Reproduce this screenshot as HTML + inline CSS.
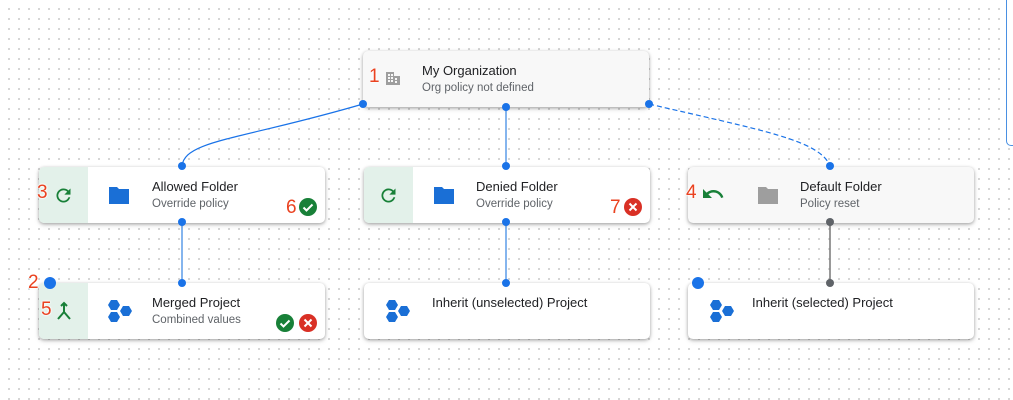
<!DOCTYPE html>
<html><head><meta charset="utf-8"><style>
*{margin:0;padding:0;box-sizing:border-box}
body{width:1013px;height:400px;overflow:hidden;position:relative;font-family:"Liberation Sans",sans-serif;
background:#fff;background-image:radial-gradient(circle,#cfcfcf 0.9px,transparent 1.2px);background-size:10px 10px;background-position:4px 4px}
.card{position:absolute;width:286px;height:56px;background:#fff;border-radius:5px;box-shadow:0 1px 3px rgba(0,0,0,.3),0 2px 6px rgba(0,0,0,.12)}
.card.grey{background:#f8f8f8}
.side{position:absolute;left:0;top:0;width:49px;height:100%;background:#e3f1ea;border-radius:5px 0 0 5px}
.t{position:absolute;left:113px;top:12px;font-size:13px;color:#202124}
.s{position:absolute;left:113px;top:31px;font-size:11.5px;color:#5f6368}
.ic{position:absolute}
.num{position:absolute;color:#ea4220;font-size:19px;text-shadow:0 0 2px #fff,0 0 2px #fff,0 0 2px #fff}
svg.lines{position:absolute;left:0;top:0}
</style></head><body>
<div style="position:absolute;left:1006px;top:-5px;width:20px;height:151px;border:1.5px solid #4a90e2;border-radius:5px;background:#fff"></div>
<svg class="lines" width="1013" height="400">
<path d="M363 104 C 240 140,185 140,182 166" stroke="#1a73e8" fill="none" stroke-width="1.2"/>
<path d="M506 104 V166" stroke="#5c9ce8" stroke-width="1.5"/>
<path d="M649 104 C 760 130,820 140,830 166" stroke="#1a73e8" fill="none" stroke-width="1.2" stroke-dasharray="5,3"/>
<path d="M182 222 V283" stroke="#5c9ce8" stroke-width="1.5"/>
<path d="M506 222 V283" stroke="#5c9ce8" stroke-width="1.5"/>
<path d="M830 222 V283" stroke="#777" stroke-width="1.5"/>
</svg>

<div class="card grey" style="left:363px;top:51px">
<svg class="ic" style="left:22px;top:19px" width="16" height="16" viewBox="0 0 16 16"><path d="M1 2h8v4h6v9H1z" fill="#9e9e9e"/><g fill="#f8f8f8"><rect x="3" y="4" width="2" height="2"/><rect x="6" y="4" width="2" height="2"/><rect x="3" y="7" width="2" height="2"/><rect x="6" y="7" width="2" height="2"/><rect x="10" y="8" width="2" height="2"/><rect x="3" y="10" width="2" height="2"/><rect x="6" y="10" width="2" height="2"/><rect x="10" y="11" width="2" height="2"/></g></svg>
<div class="t" style="left:59px;top:12px">My Organization</div><div class="s" style="left:59px;top:31px">Org policy not defined</div></div>
<div class="num" style="left:369px;top:66px">1</div>

<div class="card" style="left:39px;top:167px"><div class="side"></div>
<svg class="ic" style="left:14px;top:18px" width="21" height="21" viewBox="0 0 24 24"><path d="M17.65 6.35A8 8 0 1 0 19.73 14h-2.08A6 6 0 1 1 12 6c1.66 0 3.14.69 4.22 1.78L13 11h7V4z" fill="#188038"/></svg>
<svg class="ic" style="left:68px;top:18px" width="24" height="20" viewBox="0 0 24 20"><path d="M2 2h8l2 2h10v15H2z" fill="#1a6fd6"/></svg>
<div class="t">Allowed Folder</div><div class="s">Override policy</div>
<svg class="ic" style="left:260px;top:31px" width="18" height="18" viewBox="0 0 18 18"><circle cx="9" cy="9" r="9" fill="#188038"/><path d="M4.5 9.5l3 3 6-6" stroke="#fff" stroke-width="2" fill="none"/></svg></div>
<div class="num" style="left:37px;top:182px">3</div><div class="num" style="left:286px;top:197px">6</div>

<div class="card" style="left:364px;top:167px"><div class="side"></div>
<svg class="ic" style="left:14px;top:18px" width="21" height="21" viewBox="0 0 24 24"><path d="M17.65 6.35A8 8 0 1 0 19.73 14h-2.08A6 6 0 1 1 12 6c1.66 0 3.14.69 4.22 1.78L13 11h7V4z" fill="#188038"/></svg>
<svg class="ic" style="left:68px;top:18px" width="24" height="20" viewBox="0 0 24 20"><path d="M2 2h8l2 2h10v15H2z" fill="#1a6fd6"/></svg>
<div class="t" style="left:112px">Denied Folder</div><div class="s" style="left:112px">Override policy</div>
<svg class="ic" style="left:260px;top:31px" width="18" height="18" viewBox="0 0 18 18"><circle cx="9" cy="9" r="9" fill="#d93025"/><path d="M5.5 5.5l7 7M12.5 5.5l-7 7" stroke="#fff" stroke-width="2"/></svg></div>
<div class="num" style="left:610px;top:197px">7</div>

<div class="card grey" style="left:688px;top:167px">
<svg class="ic" style="left:13px;top:18px" width="24" height="18" viewBox="0 0 24 18"><path d="M12.5 5c-2.65 0-5.05 1-6.9 2.6L2 4v9h9L7.4 9.4A7.9 7.9 0 0 1 20.1 13l2.3-.8A10.5 10.5 0 0 0 12.5 5z" fill="#188038"/></svg>
<svg class="ic" style="left:68px;top:18px" width="24" height="20" viewBox="0 0 24 20"><path d="M2 2h8l2 2h10v15H2z" fill="#9e9e9e"/></svg>
<div class="t" style="left:112px">Default Folder</div><div class="s" style="left:112px">Policy reset</div></div>
<div class="num" style="left:686px;top:182px">4</div>

<div class="card" style="left:39px;top:283px"><div class="side"></div>
<svg class="ic" style="left:16px;top:18px" width="18" height="20" viewBox="0 0 18 20"><path d="M9 2v9M9 11l-6 7M9 11l6 7M6 5l3-3 3 3" stroke="#188038" stroke-width="2" fill="none"/></svg>
<svg class="ic" style="left:68px;top:16px" width="26" height="24" viewBox="0 0 26 24"><g fill="#1a6fd6"><polygon points="4,1 10,1 13,6 10,11 4,11 1,6"/><polygon points="16,7 22,7 25,12 22,17 16,17 13,12"/><polygon points="4,13 10,13 13,18 10,23 4,23 1,18"/></g></svg>
<div class="t">Merged Project</div><div class="s">Combined values</div>
<svg class="ic" style="left:237px;top:31px" width="18" height="18" viewBox="0 0 18 18"><circle cx="9" cy="9" r="9" fill="#188038"/><path d="M4.5 9.5l3 3 6-6" stroke="#fff" stroke-width="2" fill="none"/></svg>
<svg class="ic" style="left:260px;top:31px" width="18" height="18" viewBox="0 0 18 18"><circle cx="9" cy="9" r="9" fill="#d93025"/><path d="M5.5 5.5l7 7M12.5 5.5l-7 7" stroke="#fff" stroke-width="2"/></svg></div>
<div class="num" style="left:28px;top:272px">2</div><div class="num" style="left:41px;top:299px">5</div>

<div class="card" style="left:364px;top:283px">
<svg class="ic" style="left:21px;top:16px" width="26" height="24" viewBox="0 0 26 24"><g fill="#1a6fd6"><polygon points="4,1 10,1 13,6 10,11 4,11 1,6"/><polygon points="16,7 22,7 25,12 22,17 16,17 13,12"/><polygon points="4,13 10,13 13,18 10,23 4,23 1,18"/></g></svg>
<div class="t" style="left:68px;top:12px">Inherit (unselected) Project</div></div>

<div class="card" style="left:688px;top:283px">
<svg class="ic" style="left:21px;top:16px" width="26" height="24" viewBox="0 0 26 24"><g fill="#1a6fd6"><polygon points="4,1 10,1 13,6 10,11 4,11 1,6"/><polygon points="16,7 22,7 25,12 22,17 16,17 13,12"/><polygon points="4,13 10,13 13,18 10,23 4,23 1,18"/></g></svg>
<div class="t" style="left:64px;top:12px">Inherit (selected) Project</div></div>

<svg class="lines" width="1013" height="400">
<g fill="#1a73e8"><circle cx="363" cy="104" r="4"/><circle cx="506" cy="107" r="4"/><circle cx="649" cy="104" r="4"/>
<circle cx="182" cy="166" r="4"/><circle cx="506" cy="166" r="4"/><circle cx="830" cy="166" r="4"/>
<circle cx="182" cy="222" r="4"/><circle cx="506" cy="222" r="4"/><circle cx="182" cy="283" r="4"/><circle cx="506" cy="283" r="4"/>
<circle cx="50" cy="283" r="6"/><circle cx="698" cy="283" r="6"/></g>
<g fill="#5f6368"><circle cx="830" cy="222" r="4"/><circle cx="830" cy="283" r="4"/></g>
</svg>
</body></html>
